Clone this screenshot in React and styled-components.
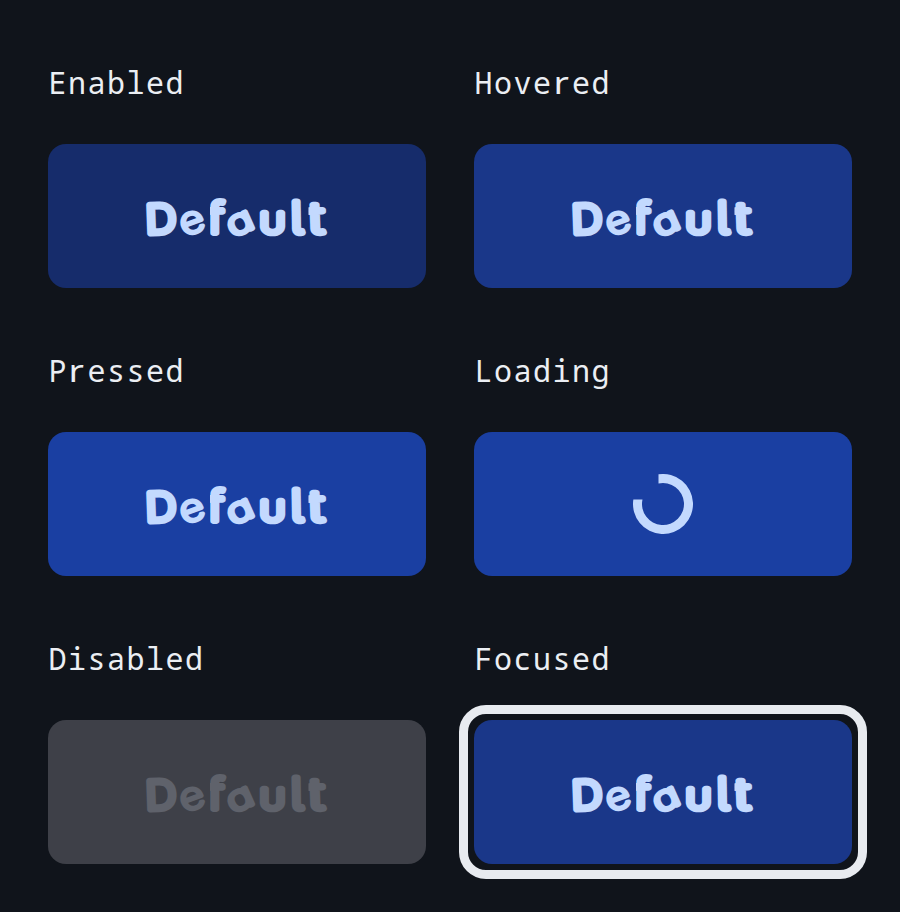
import React from "react";
import styled, { createGlobalStyle, css } from "styled-components";

const GlobalStyle = createGlobalStyle`
  * { box-sizing: border-box; }
  body { margin: 0; background: #10141b; }
`;

const Board = styled.main`
  display: grid;
  grid-template-columns: 378px 378px;
  grid-template-rows: repeat(3, 240px);
  column-gap: 48px;
  row-gap: 48px;
  width: 900px;
  height: 912px;
  padding: 48px;
  overflow: hidden;
  background: #10141b;
`;

const StateItem = styled.section`
  display: flex;
  flex-direction: column;
  gap: 26px;
`;

const StateLabel = styled.h2`
  margin: 0;
  height: 70px;
  font: 400 30px/70px "Noto Sans Mono", "Liberation Mono", monospace;
  letter-spacing: 1.5px;
  text-indent: 0.5px;
  white-space: nowrap;
  color: #ebeef3;
`;

/* A plain "r" without slab foot, kept on the monospace grid. */
const PlainR = styled.span`
  display: inline-block;
  width: 19.5px;
  font-family: "Noto Sans", sans-serif;
  line-height: 1;
  letter-spacing: 0;
  text-indent: 0;
  transform: translateX(0.5px) scaleX(1.24);
  transform-origin: left;
`;

const fills = {
  enabled: "#162c6b",
  hovered: "#1a3789",
  pressed: "#1a3fa2",
  loading: "#1a3fa2",
  disabled: "#3e4048",
  focused: "#1a3789",
};

const StateButton = styled.button`
  position: relative;
  display: flex;
  align-items: center;
  justify-content: center;
  width: 378px;
  height: 144px;
  padding: 0;
  border: 0;
  border-radius: 18px;
  background: ${(p) => fills[p.$state]};
  color: ${(p) => (p.$state === "disabled" ? "#5f626b" : "#c3d9fe")};
  ${(p) =>
    p.$state === "focused" &&
    css`
      &::after {
        content: "";
        position: absolute;
        inset: -15px;
        border: 9px solid #e8ebf0;
        border-radius: 27px;
      }
    `}
`;

/* Marker-style lettering: thin letters with a thick round outline. */
const Lettering = styled.svg`
  width: 184px;
  height: 60px;
  overflow: visible;
  font-family: Inter, sans-serif;
  font-feature-settings: "cv11", "cv05";
  fill: currentColor;
  stroke: currentColor;
  stroke-linejoin: round;
  stroke-linecap: round;
  text-anchor: middle;
`;

const Glyph = styled.text`
  font-size: ${(p) => p.$size}px;
  font-weight: ${(p) => p.$weight || 200};
  stroke-width: ${(p) => p.$stroke || 6}px;
  text-transform: ${(p) => (p.$caps ? "uppercase" : "none")};
`;

const letters = [
  { char: "D", x: 16, turn: -2, stretch: 1.08, $size: 39, $stroke: 6.5 },
  { char: "e", x: 47.5, turn: -20, stretch: 1.14, $size: 37, $stroke: 3.8 },
  { char: "f", x: 71, turn: 0, stretch: 1.15, left: 65, $size: 42 },
  { char: "a", x: 95.5, turn: -24, stretch: 1.28, $size: 34, $stroke: 4.4 },
  { char: "u", x: 127.5, turn: 0, stretch: 1.22, $size: 27, $stroke: 6.3, $caps: true },
  { char: "l", x: 152, turn: -1, stretch: 1.1, $size: 43, $stroke: 6.5 },
  { char: "t", x: 171.5, turn: -2, stretch: 1.3, left: 163.5, $size: 42 },
];

const Spinner = styled.svg`
  width: 60px;
  height: 60px;
`;

const states = [
  ["enabled", "Enabled"],
  ["hovered", "Hovered"],
  ["pressed", "Pressed"],
  ["loading", "Loading"],
  ["disabled", "Disabled"],
  ["focused", "Focused"],
];

function Label({ text }) {
  return (
    <StateLabel>
      {text.split(/(r)/).map((part, i) => (part === "r" ? <PlainR key={i}>r</PlainR> : part))}
    </StateLabel>
  );
}

function ButtonText({ id }) {
  return (
    <Lettering viewBox="0 0 184 60">
      {letters.map(({ char, x, turn, stretch, left = -10, ...shape }) => (
        <g key={char} clipPath={`url(#${id}-${char})`}>
          <clipPath id={`${id}-${char}`}>
            <rect x={left} y="0" width="200" height="70" />
          </clipPath>
          <Glyph
            y="9.5"
            transform={`translate(${x} 37.5) rotate(${turn}) scale(${stretch} 1)`}
            {...shape}
          >
            {char}
          </Glyph>
        </g>
      ))}
    </Lettering>
  );
}

export default function App() {
  return (
    <>
      <GlobalStyle />
      <Board>
        {states.map(([state, label]) => (
          <StateItem key={state}>
            <Label text={label} />
            <StateButton $state={state} disabled={state === "disabled"}>
              {state === "loading" ? (
                <Spinner viewBox="0 0 60 60" aria-label="Loading">
                  <path
                    fill="currentColor"
                    d="M25.5.34A30 30 0 1 1 .34 25.5H9.49A21 21 0 1 0 25.5 9.49Z"
                  />
                </Spinner>
              ) : (
                <ButtonText id={state} />
              )}
            </StateButton>
          </StateItem>
        ))}
      </Board>
    </>
  );
}
